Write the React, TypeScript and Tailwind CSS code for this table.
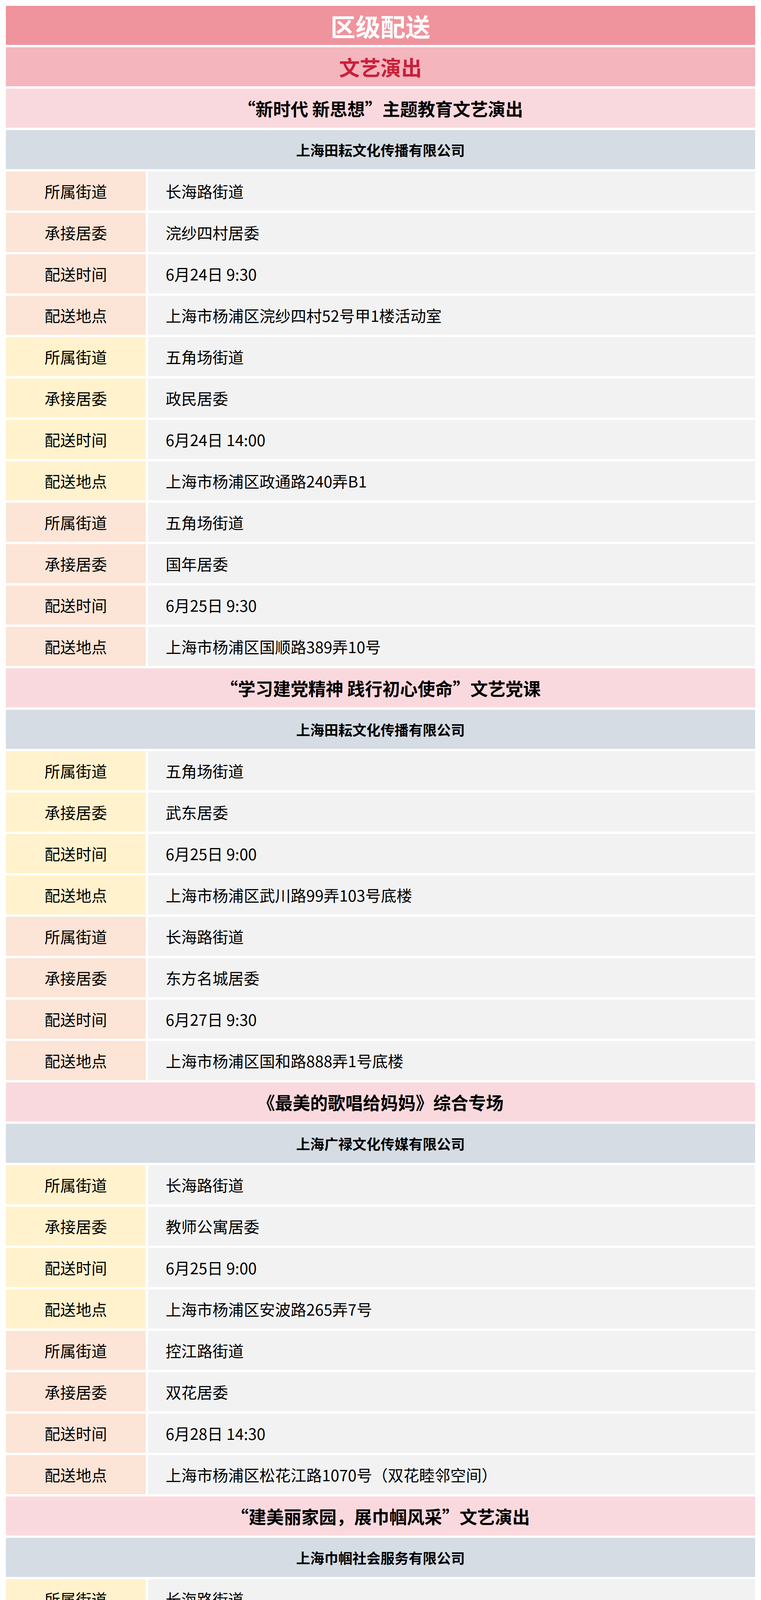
import React from 'react';

type Row = { label: string; value: string };
type Group = { tone: 'peach' | 'yellow'; street: string; committee: string; time: string; place: string };
type Section = { title: string; company: string; groups: Group[] };

const sections: Section[] = [
  {
    title: '“新时代 新思想”主题教育文艺演出',
    company: '上海田耘文化传播有限公司',
    groups: [
      { tone: 'peach', street: '长海路街道', committee: '浣纱四村居委', time: '6月24日 9:30', place: '上海市杨浦区浣纱四村52号甲1楼活动室' },
      { tone: 'yellow', street: '五角场街道', committee: '政民居委', time: '6月24日 14:00', place: '上海市杨浦区政通路240弄B1' },
      { tone: 'peach', street: '五角场街道', committee: '国年居委', time: '6月25日 9:30', place: '上海市杨浦区国顺路389弄10号' },
    ],
  },
  {
    title: '“学习建党精神 践行初心使命”文艺党课',
    company: '上海田耘文化传播有限公司',
    groups: [
      { tone: 'yellow', street: '五角场街道', committee: '武东居委', time: '6月25日 9:00', place: '上海市杨浦区武川路99弄103号底楼' },
      { tone: 'peach', street: '长海路街道', committee: '东方名城居委', time: '6月27日 9:30', place: '上海市杨浦区国和路888弄1号底楼' },
    ],
  },
  {
    title: '《最美的歌唱给妈妈》综合专场',
    company: '上海广禄文化传媒有限公司',
    groups: [
      { tone: 'yellow', street: '长海路街道', committee: '教师公寓居委', time: '6月25日 9:00', place: '上海市杨浦区安波路265弄7号' },
      { tone: 'peach', street: '控江路街道', committee: '双花居委', time: '6月28日 14:30', place: '上海市杨浦区松花江路1070号（双花睦邻空间）' },
    ],
  },
  {
    title: '“建美丽家园，展巾帼风采”文艺演出',
    company: '上海巾帼社会服务有限公司',
    groups: [
      { tone: 'yellow', street: '长海路街道', committee: '浣纱三村居委', time: '6月25日 9:00', place: '上海市杨浦区浣纱三村25号' },
    ],
  },
];

function toRows(g: Group): Row[] {
  return [
    { label: '所属街道', value: g.street },
    { label: '承接居委', value: g.committee },
    { label: '配送时间', value: g.time },
    { label: '配送地点', value: g.place },
  ];
}

function InfoRow({ row, tone }: { row: Row; tone: Group['tone'] }) {
  return (
    <div className="flex h-[100px] shrink-0 gap-[6px]">
      <div
        className={
          'flex w-[358px] shrink-0 items-center justify-center text-[40px] leading-none text-black ' +
          (tone === 'peach' ? 'bg-[#fce4d6]' : 'bg-[#fff2cc]')
        }
      >
        {row.label}
      </div>
      <div className="flex flex-1 items-center bg-[#f2f2f2] pl-[45px] text-[40px] leading-none text-black">
        {row.value}
      </div>
    </div>
  );
}

export default function App() {
  return (
    <div
      className="flex flex-col gap-[6px] bg-white p-[15px]"
      style={{ fontFamily: '"Noto Sans CJK SC", "Noto Sans", sans-serif' }}
    >
      <div className="flex h-[100px] shrink-0 items-center justify-center bg-[#ef939d] text-[64px] font-bold leading-none text-white">
        区级配送
      </div>
      <div className="flex h-[100px] shrink-0 items-center justify-center bg-[#f4b5bd] text-[53px] font-bold leading-none text-[#c8203a]">
        文艺演出
      </div>
      {sections.map((s, i) => (
        <React.Fragment key={i}>
          <div className="flex h-[100px] shrink-0 items-center justify-center bg-[#fad9de] text-[45px] font-bold leading-none text-black">
            {s.title}
          </div>
          <div className="flex h-[100px] shrink-0 items-center justify-center bg-[#d5dce4] text-[36px] font-bold leading-none text-black">
            {s.company}
          </div>
          {s.groups.map((g, j) =>
            toRows(g).map((r, k) => <InfoRow key={j + '-' + k} row={r} tone={g.tone} />)
          )}
        </React.Fragment>
      ))}
    </div>
  );
}
